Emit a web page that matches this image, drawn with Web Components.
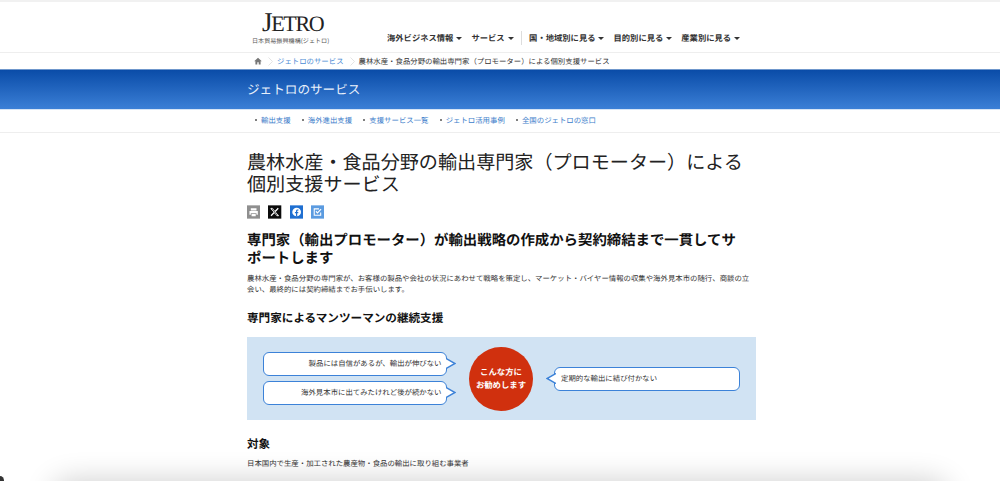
<!DOCTYPE html>
<html lang="ja">
<head>
<meta charset="utf-8">
<title>JETRO</title>
<style>
  html, body { margin: 0; height: 481px; overflow: hidden; background: #fff; }
  body { font-family: "Noto Sans CJK JP", "Liberation Sans", sans-serif; color: #333; position: relative; text-rendering: geometricPrecision; line-break: strict; }
</style>
</head>
<body>
<site-header></site-header>
<bread-crumb>農林水産・食品分野の輸出専門家（プロモーター）による個別支援サービス</bread-crumb>
<service-banner>ジェトロのサービス</service-banner>
<sub-nav></sub-nav>
<main-content></main-content>
<window-shadow></window-shadow>

<script>
const W = 509; // content column width
const L = 247; // content column left

class SiteHeader extends HTMLElement {
  connectedCallback() {
    const shadow = this.shadowRoot || this.attachShadow({ mode: 'open' });
    const left = ['海外ビジネス情報', 'サービス'];
    const right = ['国・地域別に見る', '目的別に見る', '産業別に見る'];
    const item = t => `<span class="item">${t}<i></i></span>`;
    shadow.innerHTML = `<style>
      :host { display: block; height: 50px; border-top: 2px solid #f1f1f1; border-bottom: 1px solid #eee; }
      .wrap { height: 100%; margin-left: 252px; display: flex; }
      .logo { width: 135px; display: flex; flex-direction: column; align-items: flex-start; }
      .mark { font-family: "Liberation Serif", serif; font-size: 22px; line-height: 22px; letter-spacing: -1.3px; color: #222; margin: 9px 0 0 10px; white-space: nowrap; height: 22px; }
      .mark b { font-weight: 400; font-size: 27px; }
      .sub { font-size: 6.1px; line-height: 8px; color: #555; margin-top: 4px; white-space: nowrap; }
      nav { display: flex; align-items: center; height: 16px; margin-top: 28px; font-size: 8.3px; font-weight: 700; color: #333; white-space: nowrap; }
      .item { display: flex; align-items: center; margin-right: 9px; }
      .item i { width: 0; height: 0; margin-left: 3px; border: 3px solid transparent; border-top: 3px solid #333; border-bottom: 0; }
      .sep { width: 1px; height: 14px; background: #ddd; margin: 0 7px 0 -1.5px; }
    </style>
    <div class="wrap">
      <div class="logo"><div class="mark"><b>J</b>ETRO</div><div class="sub">日本貿易振興機構(ジェトロ)</div></div>
      <nav>${left.map(item).join('')}<span class="sep"></span>${right.map(item).join('')}</nav>
    </div>`;
  }
}

class BreadCrumb extends HTMLElement {
  connectedCallback() {
    const shadow = this.shadowRoot || this.attachShadow({ mode: 'open' });
    const chev = `<svg class="chev" width="5" height="9" viewBox="0 0 5 9"><path d="M.5.5l4 4-4 4" fill="none" stroke="#ddd" stroke-width=".8"/></svg>`;
    shadow.innerHTML = `<style>
      :host { display: block; height: 16px; }
      .wrap { height: 100%; margin-left: ${L + 7}px; display: flex; align-items: center; font-size: 7.4px; color: #333; white-space: nowrap; }
      .chev { margin: 0 4px 0 6px; }
      a { color: #4a8ad4; }
    </style>
    <div class="wrap">
      <svg width="8" height="8" viewBox="0 0 8 8"><path d="M4 .8L.2 4.2h1.2V7.4h1.9V5.2h1.4v2.2h1.9V4.2h1.2z" fill="#777"/></svg>
      ${chev}<a>ジェトロのサービス</a>${chev}<span><slot></slot></span>
    </div>`;
  }
}

class ServiceBanner extends HTMLElement {
  connectedCallback() {
    const shadow = this.shadowRoot || this.attachShadow({ mode: 'open' });
    shadow.innerHTML = `<style>
      :host { display: block; height: 41px; background: linear-gradient(#0a4ca8, #3b7fd6); border-top: 1px solid #6f97cc; border-bottom: 1px solid #d6e4f5; box-sizing: border-box; }
      div { height: 100%; margin-left: ${L}px; display: flex; align-items: center; font-size: 12.6px; color: #e8f0fb; padding-bottom: 2px; box-sizing: border-box; }
    </style><div><slot></slot></div>`;
  }
}

class SubNav extends HTMLElement {
  connectedCallback() {
    const shadow = this.shadowRoot || this.attachShadow({ mode: 'open' });
    const links = ['輸出支援', '海外進出支援', '支援サービス一覧', 'ジェトロ活用事例', '全国のジェトロの窓口'];
    shadow.innerHTML = `<style>
      :host { display: block; height: 22px; border-bottom: 1px solid #eee; }
      div { height: 100%; margin-left: ${L + 8}px; display: flex; align-items: center; gap: 11.2px; font-size: 7.4px; color: #3a7cca; white-space: nowrap; padding-bottom: 2px; box-sizing: border-box; }
      span { display: flex; align-items: center; gap: 4px; }
      span::before { content: ""; width: 2px; height: 2px; background: #555; border-radius: 50%; }
    </style><div>${links.map(l => `<span>${l}</span>`).join('')}</div>`;
  }
}

class ShareIcons extends HTMLElement {
  connectedCallback() {
    const shadow = this.shadowRoot || this.attachShadow({ mode: 'open' });
    shadow.innerHTML = `<style>
      :host { display: flex; gap: 8px; height: 14px; }
      svg { display: block; }
    </style>
    <svg width="13.3" height="14" viewBox="0 0 14 14"><rect width="14" height="14" fill="#8f8f8f"/><path d="M4 3h6v2.4H4zM2.6 6h8.8v4H10V8.2H4V10H2.6zM4.8 9h4.4v2.6H4.8z" fill="#fff"/></svg>
    <svg width="13.3" height="14" viewBox="0 0 14 14"><rect width="14" height="14" fill="#0b0b0b"/><path d="M3 3l8 8.2M10.8 3L3.2 11" stroke="#fff" stroke-width="1.3" fill="none"/><path d="M3.4 3.2h1.5l5.7 7.6H9.1z" fill="#0b0b0b" stroke="#fff" stroke-width=".7"/></svg>
    <svg width="13.3" height="14" viewBox="0 0 14 14"><rect width="14" height="14" fill="#1f6fd1"/><circle cx="7" cy="7" r="4.6" fill="#fff"/><path d="M6.3 11.6V8.2H5.2V6.9h1.1V6c0-1.1.7-1.7 1.6-1.7l1 .1v1.1h-.6c-.5 0-.7.3-.7.7v.7h1.2l-.2 1.3h-1v3.4z" fill="#1f6fd1"/></svg>
    <svg width="13.3" height="14" viewBox="0 0 14 14"><rect width="14" height="14" fill="#5b9be0"/><path d="M10.2 7.6v2.9H3.4V3.7h5" fill="none" stroke="#fff" stroke-width="1.1"/><path d="M5.2 6.2l1.6 1.7 3.8-4" fill="none" stroke="#fff" stroke-width="1.2"/></svg>`;
  }
}

class SpeechBalloon extends HTMLElement {
  connectedCallback() {
    const shadow = this.shadowRoot || this.attachShadow({ mode: 'open' });
    const side = this.getAttribute('side') || 'right';
    shadow.innerHTML = `<style>
      :host { display: block; position: relative; height: 24px; box-sizing: border-box; background: #fff; border: 1.5px solid #3c82d8; border-radius: 6px; font-size: 7.4px; color: #333; }
      .txt { height: 100%; display: flex; align-items: center; white-space: nowrap; padding: 0 4.5px 1px 6px; box-sizing: border-box; justify-content: ${side === 'right' ? 'flex-end' : 'flex-start'}; }
      svg { position: absolute; top: 5px; ${side === 'right' ? 'right: -9.5px' : 'left: -9.5px; transform: scaleX(-1)'}; }
    </style>
    <div class="txt"><slot></slot></div>
    <svg width="10" height="11" viewBox="0 0 10 11"><path d="M0 .5L9 5.5 0 10.5" fill="#fff" stroke="#3c82d8" stroke-width="1.5"/></svg>`;
  }
}

class AdvicePanel extends HTMLElement {
  connectedCallback() {
    const shadow = this.shadowRoot || this.attachShadow({ mode: 'open' });
    shadow.innerHTML = `<style>
      :host { display: flex; align-items: center; height: 83px; box-sizing: border-box; background: #d1e3f3; padding: 0 16px; }
      .left { width: 184px; display: flex; flex-direction: column; gap: 5px; margin-top: -1px; }
      .circle { width: 64px; height: 64px; border-radius: 50%; background: #d0300e; color: #fff; font-size: 8.4px; font-weight: 700; line-height: 13px; text-align: center; display: flex; align-items: center; justify-content: center; margin: 0 21px 0 22px; flex: none; }
      .right { flex: 1; }
    </style>
    <div class="left">
      <speech-balloon side="right">製品には自信があるが、輸出が伸びない</speech-balloon>
      <speech-balloon side="right">海外見本市に出てみたけれど後が続かない</speech-balloon>
    </div>
    <div class="circle"><div>こんな方に<br>お勧めします</div></div>
    <div class="right"><speech-balloon side="left">定期的な輸出に結び付かない</speech-balloon></div>`;
  }
}

class MainContent extends HTMLElement {
  connectedCallback() {
    const shadow = this.shadowRoot || this.attachShadow({ mode: 'open' });
    shadow.innerHTML = `<style>
      :host { display: block; width: ${W}px; margin-left: ${L}px; color: #222; }
      h1 { font-size: 19.1px; line-height: 22px; font-weight: 400; margin: 17px 0 0; color: #222; }
      share-icons { margin-top: 11px; }
      h2 { font-size: 14.4px; line-height: 18px; font-weight: 700; margin: 12px 0 0; color: #111; }
      h3 { font-size: 11.6px; line-height: 16px; font-weight: 700; margin: 0; color: #111; }
      p { font-size: 7.4px; line-height: 11px; margin: 0; color: #333; }
      .lead { margin-top: 6px; }
      .h-first { margin-top: 15px; }
      advice-panel { margin-top: 11px; }
      .h-second { margin-top: 16px; }
      .target { margin-top: 6px; }
    </style>
    <h1>農林水産・食品分野の輸出専門家（プロモーター）による<br>個別支援サービス</h1>
    <share-icons></share-icons>
    <h2>専門家（輸出プロモーター）が輸出戦略の作成から契約締結まで一貫してサポートします</h2>
    <p class="lead">農林水産・食品分野の専門家が、お客様の製品や会社の状況にあわせて戦略を策定し、マーケット・バイヤー情報の収集や海外見本市の随行、商談の立<br>会い、最終的には契約締結までお手伝いします。</p>
    <h3 class="h-first">専門家によるマンツーマンの継続支援</h3>
    <advice-panel></advice-panel>
    <h3 class="h-second">対象</h3>
    <p class="target">日本国内で生産・加工された農産物・食品の輸出に取り組む事業者</p>`;
  }
}

// bottom edge of the captured window: soft shadow over the page
class WindowShadow extends HTMLElement {
  connectedCallback() {
    const shadow = this.shadowRoot || this.attachShadow({ mode: 'open' });
    shadow.innerHTML = `<style>
      :host { position: absolute; left: 0; right: 0; bottom: 0; height: 34px; overflow: hidden; pointer-events: none; display: block; }
      .s { position: absolute; left: 60px; right: 60px; top: 42px; height: 20px; border-radius: 20px; box-shadow: 0 0 30px 8px rgba(0,0,0,.2); }
      .c { position: absolute; left: -4px; bottom: -4px; width: 8px; height: 9px; border-radius: 50%; background: #333; }
    </style><div class="s"></div><div class="c"></div>`;
  }
}

customElements.define('site-header', SiteHeader);
customElements.define('bread-crumb', BreadCrumb);
customElements.define('service-banner', ServiceBanner);
customElements.define('sub-nav', SubNav);
customElements.define('share-icons', ShareIcons);
customElements.define('speech-balloon', SpeechBalloon);
customElements.define('advice-panel', AdvicePanel);
customElements.define('main-content', MainContent);
customElements.define('window-shadow', WindowShadow);
</script>
</body>
</html>
